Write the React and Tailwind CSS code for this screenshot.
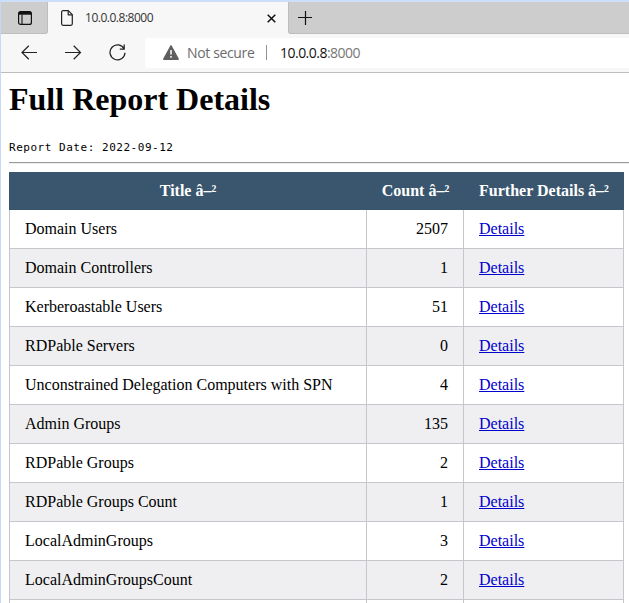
const rows = [
  ['Domain Users', 2507],
  ['Domain Controllers', 1],
  ['Kerberoastable Users', 51],
  ['RDPable Servers', 0],
  ['Unconstrained Delegation Computers with SPN', 4],
  ['Admin Groups', 135],
  ['RDPable Groups', 2],
  ['RDPable Groups Count', 1],
  ['LocalAdminGroups', 3],
  ['LocalAdminGroupsCount', 2],
  ['', ''],
];

function TabStrip() {
  return (
    <div className="flex h-8 bg-[#f7f7f7]">
      <div className="flex h-8 w-[47px] items-center justify-center rounded-br-[3px] border-b border-r border-[#bdbdbd] bg-[#cdcdcd]">
        <svg width="14" height="14" viewBox="0 0 14 14" className="ml-px mt-px" fill="none" stroke="#111">
          <rect x="0.6" y="0.6" width="12.8" height="12.8" rx="2" strokeWidth="1.2" />
          <path d="M1 2.2h12" strokeWidth="3" />
          <path d="M4 3.5v9.500" strokeWidth="1.1" />
        </svg>
      </div>
      <div className="flex w-[240px] items-center rounded-t-[3px] bg-[#f7f7f7] pl-[13px] pr-3">
        <svg width="12" height="16" viewBox="0 0 12 16" fill="none" stroke="#222" strokeWidth="1.2" strokeLinejoin="round">
          <path d="M2 .7h5.3l4 4v9.1c0 .8-.6 1.5-1.4 1.5H2c-.8 0-1.4-.7-1.4-1.5V2.1C.6 1.300 1.200.7 2 .7z" />
          <path d="M7.200.9v3.900h4" />
        </svg>
        <span className="ml-[12px] flex-1 text-[12px] tracking-[-0.48px] text-[#333]">10.0.0.8:8000</span>
        <svg width="9" height="9" viewBox="0 0 9 9" stroke="#111" strokeWidth="1.5" className="mt-[1px]">
          <path d="M.7.7l7.600 7.600M8.300.7L.7 8.300" />
        </svg>
      </div>
      <div className="flex flex-1 items-center rounded-bl-[3px] border-b border-l border-[#bdbdbd] bg-[#cdcdcd] pl-[9px]">
        <svg width="14" height="14" viewBox="0 0 14 14" stroke="#111" strokeWidth="1.2">
          <path d="M0 6.500h14M7.500 0v14" />
        </svg>
      </div>
    </div>
  );
}

function Toolbar() {
  return (
    <div className="flex h-[39px] items-center border-b border-[#bdbdbd] bg-[#f7f7f7] pb-px pl-5">
      <svg width="17" height="15" viewBox="0 0 17 15" fill="none" stroke="#222" strokeWidth="1.2">
        <path d="M16 7.500H1M7.800.8L1 7.500l6.800 6.700" />
      </svg>
      <svg width="17" height="15" viewBox="0 0 17 15" fill="none" stroke="#222" strokeWidth="1.2" className="ml-[27px]">
        <path d="M0 7.500h15.500M8.700.8l6.800 6.700-6.800 6.700" />
      </svg>
      <svg width="17" height="17" viewBox="0 0 17 17" fill="none" stroke="#222" strokeWidth="1.25" className="ml-[27px]">
        <path d="M15.200 5A7.500 7.500 0 1 0 16 8.800M15.200.5V5H10.800" />
      </svg>
      <div className="ml-[19px] flex h-[30px] flex-1 items-center rounded-l-[3px] bg-white pl-[18px] text-[14px]">
        <svg width="16" height="15" viewBox="0 0 16 15">
          <path d="M8 .8L15.200 14.200H.8z" fill="#5f5f5f" stroke="#5f5f5f" strokeWidth="1.400" strokeLinejoin="round" />
          <path d="M8 5v4.500M8 11v1.700" stroke="#fff" strokeWidth="1.500" />
        </svg>
        <span className="ml-2 w-[68px] whitespace-nowrap tracking-[-0.36px] text-[#6b6b6b]">Not secure</span>
        <span className="ml-[11px] h-[15px] w-px bg-[#929292]" />
        <span className="ml-[13px] whitespace-nowrap tracking-[-0.52px] text-[#111]">
          10.0.0.8<span className="text-[#777]">:8000</span>
        </span>
      </div>
    </div>
  );
}

function Report() {
  return (
    <main className="pl-2 font-['Liberation_Serif',serif] text-black">
      <h1 className="pt-[8px] text-[32px] font-bold leading-[37px]">Full Report Details</h1>
      <p className="mt-[22px] font-['DejaVu_Sans_Mono',monospace] text-[11px] leading-[15px] tracking-[0.53px]">
        Report Date: 2022-09-12
      </p>
      <hr className="mt-[7px] h-[2px] border-b border-t border-b-[#eeeeee] border-t-[#9a9a9a]" />
      <table className="mt-[8px] w-[615px] table-fixed border-separate border-spacing-0 text-[16px] leading-[18px]">
        <colgroup>
          <col className="w-[358px]" />
          <col className="w-[97px]" />
          <col className="w-[160px]" />
        </colgroup>
        <thead>
          <tr className="h-[38px] bg-[#39566e] text-white">
            <th className="p-0">Title â–²</th>
            <th className="p-0">Count â–²</th>
            <th className="p-0">Further Details â–²</th>
          </tr>
        </thead>
        <tbody>
          {rows.map(([title, count], i) => (
            <tr key={i} className="h-[39px] odd:bg-white even:bg-[#efeff1]">
              <td className="border-b border-l border-r border-[#c6c6cd] py-0 pl-[15px]">{title}</td>
              <td className="border-b border-r border-[#c6c6cd] py-0 pr-[15px] text-right">{count}</td>
              <td className="border-b border-r border-[#c6c6cd] py-0 pl-[15px]">
                {title && <a href="#" className="text-[#0000cc] underline">Details</a>}
              </td>
            </tr>
          ))}
        </tbody>
      </table>
    </main>
  );
}

export default function App() {
  return (
    <div className="h-[603px] w-[629px] overflow-hidden border-l border-t-2 border-l-[#cad8f4] border-t-[#cbdff8] bg-white font-['Open_Sans',sans-serif]">
      <TabStrip />
      <Toolbar />
      <Report />
    </div>
  );
}
